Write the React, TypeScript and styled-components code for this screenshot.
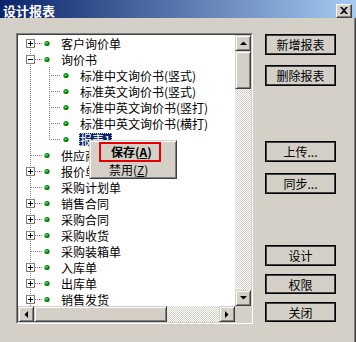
import React from 'react';
import styled, { createGlobalStyle, css } from 'styled-components';

const GlobalStyle = createGlobalStyle`
  html, body {
    margin: 0;
    padding: 0;
    background: #d4d0c8;
  }
`;

interface TreeNode {
  label: string;
  level: 0 | 1;
  exp?: '+' | '-';
  last?: boolean;
  selected?: boolean;
}

const nodes: TreeNode[] = [
  { label: '客户询价单', level: 0, exp: '+' },
  { label: '询价书', level: 0, exp: '-' },
  { label: '标准中文询价书(竖式)', level: 1 },
  { label: '标准英文询价书(竖式)', level: 1 },
  { label: '标准中英文询价书(竖打)', level: 1 },
  { label: '标准中英文询价书(横打)', level: 1 },
  { label: '报表1', level: 1, last: true, selected: true },
  { label: '供应商', level: 0 },
  { label: '报价单', level: 0, exp: '+' },
  { label: '采购计划单', level: 0 },
  { label: '销售合同', level: 0, exp: '+' },
  { label: '采购合同', level: 0, exp: '+' },
  { label: '采购收货', level: 0, exp: '+' },
  { label: '采购装箱单', level: 0 },
  { label: '入库单', level: 0, exp: '+' },
  { label: '出库单', level: 0, exp: '+' },
  { label: '销售发货', level: 0, exp: '+' },
];

const Window = styled.div`
  width: 356px;
  height: 342px;
  overflow: hidden;
  display: flex;
  flex-direction: column;
  background: #d4d0c8;
  box-shadow: inset -1px 0 #404040, inset -2px 0 #808080;
  font-family: 'Noto Sans CJK SC', 'Liberation Sans', sans-serif;
  font-size: 12px;
  color: #000;
`;

const TitleBar = styled.div`
  height: 18px;
  box-sizing: border-box;
  padding: 3px 4px 0 3px;
  display: flex;
  align-items: center;
  background: linear-gradient(to right, #0a246a, #a6caf0);
`;

const Title = styled.span`
  color: #fff;
  font-weight: bold;
  font-size: 13px;
  line-height: 15px;
`;

const CloseButton = styled.div`
  margin-left: auto;
  width: 16px;
  height: 14px;
  box-sizing: border-box;
  display: flex;
  align-items: center;
  justify-content: center;
  background: #d4d0c8;
  border: 1px solid;
  border-color: #fff #404040 #404040 #fff;
  box-shadow: inset -1px -1px #808080;
`;

const Body = styled.div`
  flex: 1;
  display: flex;
  gap: 12px;
  padding: 15px 0 0 16px;
`;

const TreeFrame = styled.div`
  position: relative;
  width: 237px;
  height: 291px;
  box-sizing: border-box;
  border: 1px solid;
  border-color: #808080 #fff #fff #808080;
`;

const TreeInner = styled.div`
  height: 100%;
  box-sizing: border-box;
  border: 1px solid;
  border-color: #404040 #d4d0c8 #d4d0c8 #404040;
  display: grid;
  grid-template-columns: 1fr 16px;
  grid-template-rows: 1fr 16px;
`;

const TreeView = styled.div`
  background: #fff;
  overflow: hidden;
`;

const Row = styled.div`
  display: flex;
  align-items: center;
  height: 16px;
  white-space: nowrap;
`;

const Guide = styled.svg`
  flex-shrink: 0;
  display: block;
`;

const Label = styled.span<{ $selected?: boolean }>`
  line-height: 13px;
  padding: 0 1px;
  ${p =>
    p.$selected &&
    css`
      background: #0a246a;
      color: #fff;
      outline: 1px dotted #d4d0c8;
      outline-offset: -1px;
    `}
`;

const ScrollBar = styled.div<{ $dir: 'v' | 'h' }>`
  display: flex;
  flex-direction: ${p => (p.$dir === 'v' ? 'column' : 'row')};
`;

const raised = css`
  box-sizing: border-box;
  background: #d4d0c8;
  border: 1px solid;
  border-color: #d4d0c8 #404040 #404040 #d4d0c8;
  box-shadow: inset 1px 1px #fff, inset -1px -1px #808080;
`;

const ScrollButton = styled.div`
  ${raised};
  width: 16px;
  height: 16px;
  flex-shrink: 0;
  display: flex;
  align-items: center;
  justify-content: center;
`;

const Thumb = styled.div<{ $size: number; $dir: 'v' | 'h' }>`
  ${raised};
  flex-shrink: 0;
  ${p => (p.$dir === 'v' ? `height: ${p.$size}px;` : `width: ${p.$size}px;`)}
`;

const Track = styled.div`
  flex: 1;
  background: repeating-conic-gradient(#fff 0 25%, #d4d0c8 0 50%) 0 0 / 2px 2px;
`;

const Corner = styled.div`
  background: #d4d0c8;
`;

const Menu = styled.div`
  position: absolute;
  left: 72px;
  top: 106px;
  width: 88px;
  height: 39px;
  box-sizing: border-box;
  padding: 1px 0 0;
  background: #d4d0c8;
  border: 1px solid;
  border-color: #d4d0c8 #404040 #404040 #d4d0c8;
  box-shadow: inset 1px 1px #fff, inset -1px -1px #808080;
`;

const MenuItem = styled.div<{ $marked?: boolean }>`
  box-sizing: border-box;
  white-space: nowrap;
  ${p =>
    p.$marked
      ? css`
          margin-left: 9px;
          width: 62px;
          height: 20px;
          padding-left: 10px;
          border: 2px solid #e40000;
          font-weight: bold;
          line-height: 16px;
        `
      : css`
          height: 16px;
          padding-left: 19px;
          line-height: 16px;
        `}
`;

const ButtonColumn = styled.div`
  display: flex;
  flex-direction: column;
  padding-top: 1px;
`;

const ButtonGroup = styled.div<{ $top: number; $gap: number }>`
  display: flex;
  flex-direction: column;
  margin-top: ${p => p.$top}px;
  gap: ${p => p.$gap}px;
`;

const Button = styled.div<{ $h?: number }>`
  width: 71px;
  height: ${p => p.$h ?? 21}px;
  box-sizing: border-box;
  display: flex;
  align-items: center;
  justify-content: center;
  border: 1px solid #000;
  box-shadow: inset 0 0 0 1px #404040;
  background: #d4d0c8;
`;

const dot = { stroke: '#808080', strokeWidth: 1, strokeDasharray: '1 1' };

const Bullet = ({ cx }: { cx: number }) => (
  <>
    <circle cx={cx} cy={8.5} r={2.6} fill="#0b7d0b" />
    <circle cx={cx - 0.4} cy={8.1} r={1.4} fill="#35c935" />
  </>
);

const Guides = ({ node, first }: { node: TreeNode; first: boolean }) => {
  const w = node.level === 0 ? 42 : 61;
  return (
    <Guide width={w} height={16}>
      <line x1={12.5} y1={first ? 8 : 0} x2={12.5} y2={16} {...dot} />
      {node.level === 0 ? (
        <>
          <line x1={node.exp ? 17 : 13} y1={8.5} x2={25} y2={8.5} {...dot} />
          {node.exp && (
            <>
              <rect x={8.5} y={4.5} width={8} height={8} fill="#fff" stroke="#808080" />
              <line x1={10} y1={8.5} x2={15} y2={8.5} stroke="#000" />
              {node.exp === '+' && <line x1={12.5} y1={6} x2={12.5} y2={11} stroke="#000" />}
            </>
          )}
          <Bullet cx={29} />
        </>
      ) : (
        <>
          <line x1={31.5} y1={0} x2={31.5} y2={node.last ? 9 : 16} {...dot} />
          <line x1={33} y1={8.5} x2={43} y2={8.5} {...dot} />
          <Bullet cx={48} />
        </>
      )}
    </Guide>
  );
};

const Arrow = ({ dir }: { dir: 'up' | 'down' | 'left' | 'right' }) => {
  const pts = {
    up: '0,4 7,4 3.5,0.5',
    down: '0,0 7,0 3.5,3.5',
    left: '4,0 4,7 0.5,3.5',
    right: '0,0 0,7 3.5,3.5',
  }[dir];
  const vertical = dir === 'up' || dir === 'down';
  return (
    <svg width={vertical ? 7 : 4} height={vertical ? 4 : 7}>
      <polygon points={pts} fill="#000" />
    </svg>
  );
};

export default function App() {
  return (
    <Window>
      <GlobalStyle />
      <TitleBar>
        <Title>设计报表</Title>
        <CloseButton>
          <svg width={8} height={7}>
            <path d="M0 0 L2 0 L4 2 L6 0 L8 0 L5 3.5 L8 7 L6 7 L4 5 L2 7 L0 7 L3 3.5 Z" fill="#000" />
          </svg>
        </CloseButton>
      </TitleBar>
      <Body>
        <TreeFrame>
          <TreeInner>
            <TreeView>
              {nodes.map((n, i) => (
                <Row key={n.label}>
                  <Guides node={n} first={i === 0} />
                  <Label $selected={n.selected}>{n.label}</Label>
                </Row>
              ))}
            </TreeView>
            <ScrollBar $dir="v">
              <ScrollButton>
                <Arrow dir="up" />
              </ScrollButton>
              <Thumb $dir="v" $size={38} />
              <Track />
              <ScrollButton>
                <Arrow dir="down" />
              </ScrollButton>
            </ScrollBar>
            <ScrollBar $dir="h">
              <ScrollButton>
                <Arrow dir="left" />
              </ScrollButton>
              <Thumb $dir="h" $size={133} />
              <Track />
              <ScrollButton>
                <Arrow dir="right" />
              </ScrollButton>
            </ScrollBar>
            <Corner />
          </TreeInner>
          <Menu>
            <MenuItem $marked>
              保存(<u>A</u>)
            </MenuItem>
            <MenuItem>
              禁用(<u>Z</u>)
            </MenuItem>
          </Menu>
        </TreeFrame>
        <ButtonColumn>
          <ButtonGroup $top={0} $gap={10}>
            <Button>新增报表</Button>
            <Button>删除报表</Button>
          </ButtonGroup>
          <ButtonGroup $top={55} $gap={11}>
            <Button>上传...</Button>
            <Button>同步...</Button>
          </ButtonGroup>
          <ButtonGroup $top={51} $gap={8}>
            <Button $h={21}>设计</Button>
            <Button $h={20}>权限</Button>
            <Button $h={20}>关闭</Button>
          </ButtonGroup>
        </ButtonColumn>
      </Body>
    </Window>
  );
}
